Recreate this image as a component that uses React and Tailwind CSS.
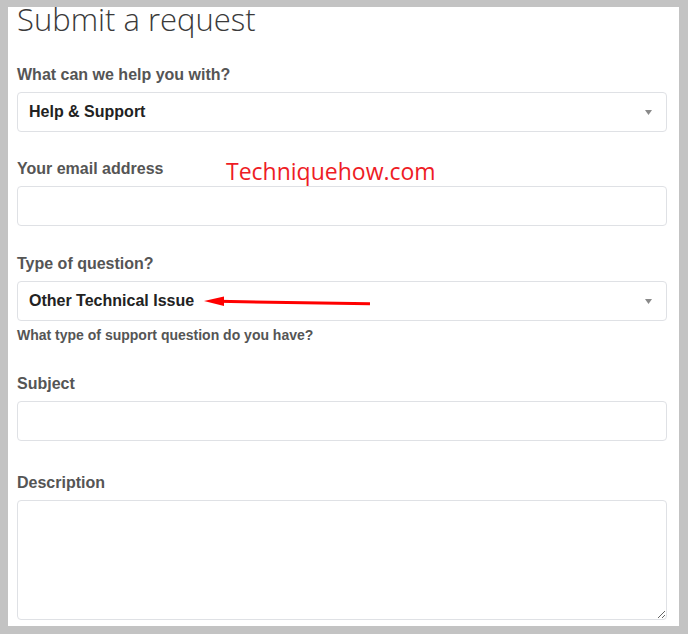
import React from 'react'

const labelCls = "block text-[16px] leading-[20px] font-bold text-[#555] mb-[7px]"
const fieldCls = "block w-full h-[40px] border border-[#dfe1e5] rounded-[4px] bg-white"

const Caret = () => (
  <svg width="7" height="5" viewBox="0 0 7 5" className="absolute right-[14px] top-[17px]">
    <path d="M0 0 H7 L3.5 5 Z" fill="#8a8a8a" />
  </svg>
)

const SelectBox = ({ value }) => (
  <div className={`${fieldCls} relative flex items-center pl-[11px]`}>
    <span className="text-[16px] font-bold text-[#222]">{value}</span>
    <Caret />
  </div>
)

export default function App() {
  return (
    <div className="min-h-[634px] bg-[#c3c3c3] pt-[7px] pl-[8px] pr-[9px] pb-[8px]" style={{ fontFamily: '"Liberation Sans", Arial, sans-serif' }}>
      <div className="relative bg-white h-[619px] pl-[9px] pr-[12px] overflow-hidden">
        <h1 className="-mt-[6px] text-[31px] leading-[36px] font-light text-[#3a3a3a]" style={{ fontFamily: '"Open Sans", sans-serif' }}>
          Submit a request
        </h1>

        <div className="mt-[28px]">
          <label className={labelCls}>What can we help you with?</label>
          <SelectBox value="Help & Support" />
        </div>

        <div className="mt-[27px]">
          <label className={labelCls}>Your email address</label>
          <div className={fieldCls} />
        </div>

        <div className="mt-[28px]">
          <label className={labelCls}>Type of question?</label>
          <SelectBox value="Other Technical Issue" />
          <p className="mt-[5px] text-[14px] leading-[18px] font-bold text-[#555]">What type of support question do you have?</p>
        </div>

        <div className="mt-[30px]">
          <label className={labelCls}>Subject</label>
          <div className={fieldCls} />
        </div>

        <div className="mt-[32px]">
          <label className={labelCls}>Description</label>
          <textarea className="block w-full h-[120px] border border-[#dfe1e5] rounded-[4px] bg-white" />
        </div>

        {/* watermark */}
        <span className="absolute left-[218px] top-[149px] text-[23px] leading-[30px] text-[#ee1c25]" style={{ fontFamily: '"Open Sans", sans-serif' }}>
          Techniquehow.com
        </span>

        {/* red arrow */}
        <svg className="absolute left-0 top-0" width="679" height="619" viewBox="0 0 679 619">
          <line x1="210" y1="294.3" x2="362" y2="296.8" stroke="#f00" strokeWidth="3" />
          <path d="M196 294 L216 289.5 L216 299 Z" fill="#f00" />
        </svg>
      </div>
    </div>
  )
}
